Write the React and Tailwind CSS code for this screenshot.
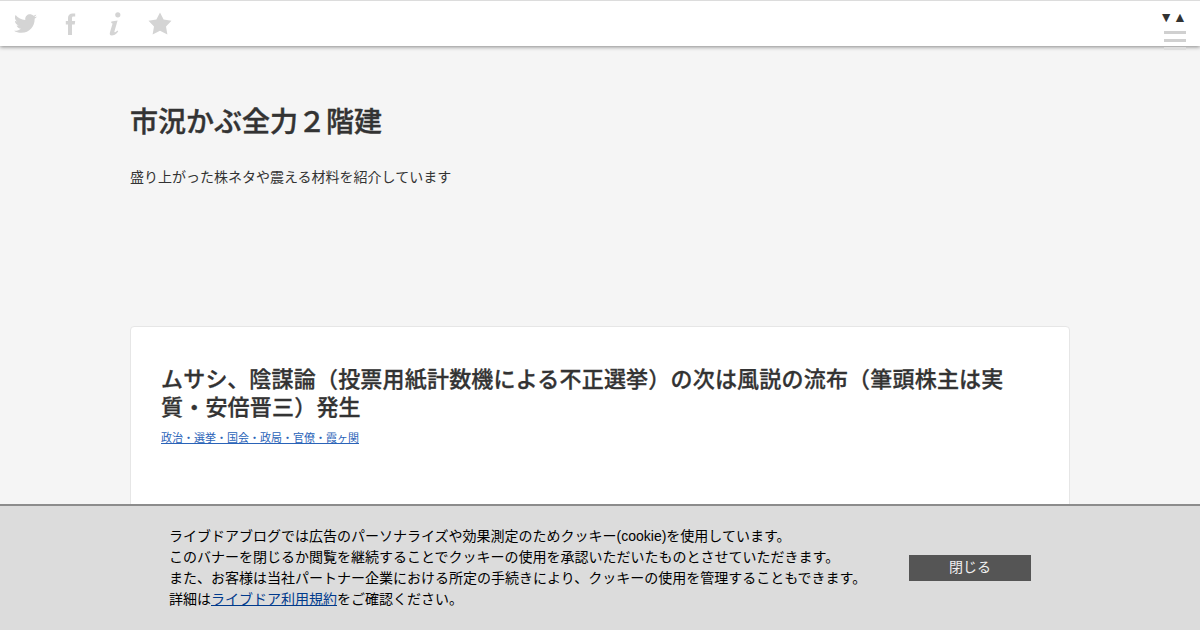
import React from "react";
import { FaTwitter } from "react-icons/fa";

const font = { fontFamily: '"Liberation Sans", "Noto Sans CJK JP", sans-serif' };

function FacebookIcon() {
  return (
    <svg viewBox="0 0 11 22" className="w-[11px] h-[22px] fill-[#d4d4d4]">
      <path d="M3 22 V11.5 H0.8 V8 H3 V5 C3 2 4.8 0.5 7.6 0.5 H10.2 V3.6 H8.4 C7.3 3.6 7 4.2 7 5.2 V8 H10.2 L9.7 11.5 H7 V22 Z" />
    </svg>
  );
}

function InfoIcon() {
  return (
    <svg viewBox="0 0 14 24" className="w-[14px] h-[24px] fill-[#d4d4d4]">
      <circle cx="9.8" cy="2.8" r="2.6" />
      <path d="M3.4 9.4 L9.6 8.4 L6.4 19.6 C6.2 20.8 7.2 20.6 9.6 18.6 L10.2 19.6 C7.8 22.6 5.6 23.6 3.8 23.6 C2 23.6 1.4 22.4 1.9 20.6 L4.6 11.4 L3.2 10.9 Z" />
    </svg>
  );
}

function StarIcon() {
  return (
    <svg viewBox="0 0 24 23" className="w-[24px] h-[23px] fill-[#d4d4d4]">
      <path d="M12 0.5 L15.6 7.6 L23.5 8.8 L18 14.4 L19.4 22.5 L12 18.8 L4.6 22.5 L6 14.4 L0.5 8.8 L8.4 7.6 Z" />
    </svg>
  );
}

function Header() {
  return (
    <header className="h-[46px] shrink-0 bg-white border-t border-[#dcdcdc] shadow-[0_1px_4px_rgba(0,0,0,0.45)] flex items-start justify-between relative z-10">
      <div className="flex items-center h-[45px] pl-[14px] text-[#d4d4d4]">
        <FaTwitter className="w-[23px] h-[23px]" />
        <div className="ml-[28px]"><FacebookIcon /></div>
        <div className="ml-[32px]"><InfoIcon /></div>
        <div className="ml-[26px]"><StarIcon /></div>
      </div>
      <div className="w-[46px] pr-[8px] flex flex-col items-center pt-[8px]">
        <div className="text-[14px] leading-[16px] text-[#333] whitespace-nowrap">▼▲</div>
        <div className="flex flex-col gap-[5px] mt-[6px] w-[22px] ml-[3px]">
          <div className="h-[3px] bg-[#d0d0d0]" />
          <div className="h-[3px] bg-[#d0d0d0]" />
          <div className="h-[3px] bg-[#dddddd]" />
        </div>
      </div>
    </header>
  );
}

function CookieBanner() {
  return (
    <div className="absolute left-0 right-0 bottom-0 h-[126px] z-20 bg-[#dcdcdc] border-t-2 border-[#8c8c8c] flex items-center">
      <div className="ml-[169px] w-[740px] text-[14px] leading-[21px] text-black">
        <p>ライブドアブログでは広告のパーソナライズや効果測定のためクッキー(cookie)を使用しています。</p>
        <p>このバナーを閉じるか閲覧を継続することでクッキーの使用を承認いただいたものとさせていただきます。</p>
        <p>また、お客様は当社パートナー企業における所定の手続きにより、クッキーの使用を管理することもできます。</p>
        <p>詳細は<a href="#" className="text-[#003a8c] underline">ライブドア利用規約</a>をご確認ください。</p>
      </div>
      <button type="button" className="w-[122px] h-[26px] -mt-[1px] pb-[2px] bg-[#555555] text-[#f0f0f0] text-[14px] leading-[22px] text-center">
        閉じる
      </button>
    </div>
  );
}

export default function App() {
  return (
    <div style={font} className="relative w-[1200px] h-[630px] overflow-hidden bg-[#f5f5f5] flex flex-col text-[#333]">
      <Header />
      <main className="w-[940px] mx-auto">
        <h1 className="mt-[59px] text-[28px] leading-[36px] font-medium [-webkit-text-stroke:0.4px_#333] text-[#333]">{"市況かぶ全力\uFF12階建"}</h1>
        <p className="mt-[26px] text-[14px] leading-[20px] text-[#333]">盛り上がった株ネタや震える材料を紹介しています</p>
        <article className="mt-[139px] h-[400px] bg-white border border-[#e6e6e6] rounded-[4px] pt-[39px] px-[30px]">
          <h2 className="text-[22px] leading-[28px] tracking-[0.2px] font-medium [-webkit-text-stroke:0.3px_#333] text-[#333]">
            {"ムサシ、陰謀論\uFF08投票用紙計数機による不正選挙\uFF09の次は風説の流布\uFF08筆頭株主は実質・安倍晋三\uFF09発生"}
          </h2>
          <a href="#" className="block mt-[8px] text-[11px] leading-[16px] text-[#2a63b8] underline">
            政治・選挙・国会・政局・官僚・霞ヶ関
          </a>
        </article>
      </main>
      <CookieBanner />
    </div>
  );
}
